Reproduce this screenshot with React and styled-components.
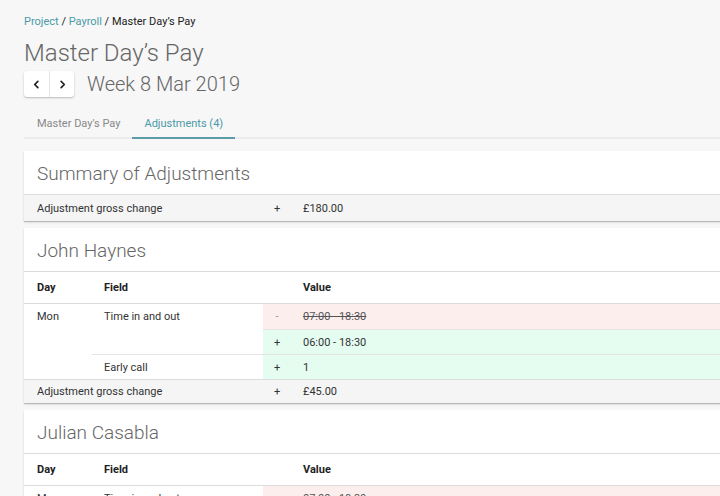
import styled, { createGlobalStyle } from 'styled-components';

const GlobalStyle = createGlobalStyle`
  *, *::before, *::after {
    box-sizing: border-box;
  }
  html, body {
    margin: 0;
    padding: 0;
    background: #f7f7f7;
    overflow: hidden;
  }
  body {
    font-family: Roboto, "Liberation Sans", sans-serif;
    color: #333;
  }
`;

const teal = '#4a9aa8';

const Page = styled.div`
  padding: 15px 0 0 24px;
  width: 740px;
`;

const Breadcrumb = styled.div`
  font-size: 11px;
  line-height: 13px;
  color: #222;
`;

const Crumb = styled.a`
  color: ${teal};
  text-decoration: none;
`;

const Title = styled.h1`
  margin: 10px 0 0;
  font-size: 24px;
  line-height: 30px;
  font-weight: 300;
  color: #666;
`;

const WeekRow = styled.div`
  display: flex;
  align-items: center;
  gap: 13px;
  margin-top: 3px;
`;

const NavGroup = styled.div`
  display: flex;
  height: 26px;
  background: #fff;
  border-radius: 3px;
  box-shadow: 0 1px 2px rgba(0, 0, 0, 0.25);
`;

const NavButton = styled.button`
  width: 25px;
  height: 26px;
  border: none;
  background: transparent;
  display: flex;
  align-items: center;
  justify-content: center;
  padding: 0;
  cursor: pointer;
  & + & {
    border-left: 1px solid #e6e6e6;
  }
`;

const Week = styled.div`
  font-size: 20px;
  font-weight: 300;
  color: #666;
`;

const Tabs = styled.div`
  display: flex;
  margin-top: 9px;
  border-bottom: 2px solid #ebebeb;
`;

const Tab = styled.div`
  padding: 11px 12px 7px;
  font-size: 11px;
  line-height: 13px;
  color: ${(p) => (p.$active ? teal : '#888')};
  border-bottom: 2px solid ${(p) => (p.$active ? '#5b9ca7' : 'transparent')};
  margin-bottom: -2px;
  &:first-child {
    padding-left: 13px;
  }
`;

const Cards = styled.div`
  display: flex;
  flex-direction: column;
  gap: 7px;
  margin-top: 12px;
`;

const Card = styled.section`
  background: #fff;
  box-shadow: 0 1px 1px rgba(0, 0, 0, 0.22), 0 2px 3px rgba(0, 0, 0, 0.06);
`;

const CardTitle = styled.h2`
  margin: 0;
  height: 44px;
  display: flex;
  align-items: center;
  padding: 1px 13px 0;
  font-size: 19px;
  font-weight: 300;
  color: #666;
  border-bottom: 1px solid #dcdcdc;
`;

const Grid = styled.div`
  display: grid;
  grid-template-columns: 68px 171px 28px 1fr;
  grid-auto-rows: 25px;
  font-size: 11px;
`;

const HeadRow = styled(Grid)`
  grid-auto-rows: 31px;
  border-bottom: 1px solid #dcdcdc;
`;

const Head = styled.div`
  display: flex;
  align-items: center;
  padding-left: ${(p) => (p.$first ? 13 : 12)}px;
  font-weight: 700;
  color: #222;
`;

const Cell = styled.div`
  display: flex;
  align-items: ${(p) => (p.$top ? 'flex-start' : 'center')};
  line-height: 25px;
  padding-left: ${(p) => (p.$first ? 13 : 12)}px;
  color: #333;
  background: ${(p) => (p.$kind === 'del' ? '#fdeeee' : p.$kind === 'add' ? '#e5fcf1' : 'transparent')};
  border-top: ${(p) => (p.$line ? '1px solid #e4e4e4' : 'none')};
`;

const Sign = styled(Cell)`
  padding-left: 0;
  justify-content: center;
  color: ${(p) => (p.$kind === 'del' ? '#999' : '#333')};
`;

const Old = styled.span`
  text-decoration: line-through;
  color: #555;
`;

const GrossRow = styled(Grid)`
  grid-auto-rows: 23px;
  background: #f5f5f5;
  border-top: ${(p) => (p.$line ? '1px solid #dcdcdc' : 'none')};
  padding-top: ${(p) => (p.$line ? 0 : 2)}px;
  padding-bottom: ${(p) => (p.$line ? 0 : 1)}px;
`;

const GrossLabel = styled(Cell)`
  grid-column: 1 / span 2;
  line-height: 23px;
`;

const GrossCell = styled(Cell)`
  line-height: 23px;
`;

const GrossSign = styled(Sign)`
  line-height: 23px;
`;

const Chevron = ({ dir }) => (
  <svg width="9" height="9" viewBox="0 0 10 10" fill="none" stroke="#222" strokeWidth="1.9" strokeLinecap="round" strokeLinejoin="round">
    {dir === 'left' ? <path d="M6.5 1.5 L3 5 L6.5 8.5" /> : <path d="M3.5 1.5 L7 5 L3.5 8.5" />}
  </svg>
);

const TableHead = () => (
  <HeadRow>
    <Head $first>Day</Head>
    <Head>Field</Head>
    <Head />
    <Head>Value</Head>
  </HeadRow>
);

const Gross = ({ amount, line }) => (
  <GrossRow $line={line}>
    <GrossLabel $first>Adjustment gross change</GrossLabel>
    <GrossSign>+</GrossSign>
    <GrossCell>{amount}</GrossCell>
  </GrossRow>
);

export default function App() {
  return (
    <Page>
      <GlobalStyle />
      <Breadcrumb>
        <Crumb href="#">Project</Crumb> / <Crumb href="#">Payroll</Crumb> / Master Day’s Pay
      </Breadcrumb>
      <Title>Master Day’s Pay</Title>
      <WeekRow>
        <NavGroup>
          <NavButton aria-label="Previous week"><Chevron dir="left" /></NavButton>
          <NavButton aria-label="Next week"><Chevron dir="right" /></NavButton>
        </NavGroup>
        <Week>Week 8 Mar 2019</Week>
      </WeekRow>
      <Tabs>
        <Tab>Master Day's Pay</Tab>
        <Tab $active>Adjustments (4)</Tab>
      </Tabs>

      <Cards>
        <Card>
          <CardTitle>Summary of Adjustments</CardTitle>
          <Gross amount="£180.00" />
        </Card>

        <Card>
          <CardTitle>John Haynes</CardTitle>
          <TableHead />
          <Grid>
            <Cell $first $top style={{ gridRow: '1 / span 3', gridColumn: 1 }}>Mon</Cell>
            <Cell $top style={{ gridRow: '1 / span 2', gridColumn: 2 }}>Time in and out</Cell>
            <Sign $kind="del" style={{ gridRow: 1, gridColumn: 3 }}>-</Sign>
            <Cell $kind="del" style={{ gridRow: 1, gridColumn: 4 }}><Old>07:00 - 18:30</Old></Cell>
            <Sign $kind="add" $line style={{ gridRow: 2, gridColumn: 3 }}>+</Sign>
            <Cell $kind="add" $line style={{ gridRow: 2, gridColumn: 4 }}>06:00 - 18:30</Cell>
            <Cell $line style={{ gridRow: 3, gridColumn: 2 }}>Early call</Cell>
            <Sign $kind="add" $line style={{ gridRow: 3, gridColumn: 3 }}>+</Sign>
            <Cell $kind="add" $line style={{ gridRow: 3, gridColumn: 4 }}>1</Cell>
          </Grid>
          <Gross amount="£45.00" line />
        </Card>

        <Card>
          <CardTitle>Julian Casabla</CardTitle>
          <TableHead />
          <Grid>
            <Cell $first $top style={{ gridRow: '1 / span 2', gridColumn: 1 }}>Mon</Cell>
            <Cell $top style={{ gridRow: '1 / span 2', gridColumn: 2 }}>Time in and out</Cell>
            <Sign $kind="del" style={{ gridRow: 1, gridColumn: 3 }}>-</Sign>
            <Cell $kind="del" style={{ gridRow: 1, gridColumn: 4 }}><Old>07:00 - 18:30</Old></Cell>
            <Sign $kind="add" $line style={{ gridRow: 2, gridColumn: 3 }}>+</Sign>
            <Cell $kind="add" $line style={{ gridRow: 2, gridColumn: 4 }}>06:00 - 18:30</Cell>
          </Grid>
        </Card>
      </Cards>
    </Page>
  );
}
